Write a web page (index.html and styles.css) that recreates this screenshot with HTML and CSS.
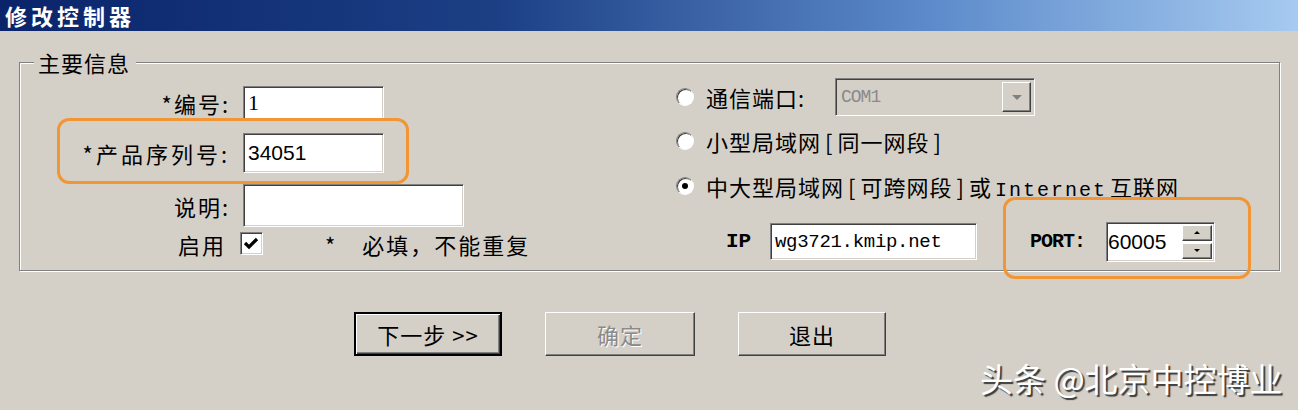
FILE: index.html
```html
<!DOCTYPE html>
<html lang="zh-CN">
<head>
<meta charset="utf-8">
<title>修改控制器</title>
<link rel="stylesheet" href="styles.css">
</head>
<body>
<div class="window">
  <div class="titlebar">修改控制器</div>
  <div class="client">
    <fieldset class="group">
      <legend>主要信息</legend>
      <div class="cols">
        <div class="left">
          <div class="row r1">
            <span class="lbl">*编号:</span>
            <div class="field f1"><span class="val serif">1</span></div>
          </div>
          <div class="row r2">
            <span class="lbl wide">*产品序列号:</span>
            <div class="field f2"><span class="val">34051</span></div>
          </div>
          <div class="row r3">
            <span class="lbl">说明:</span>
            <div class="field f3"></div>
          </div>
          <div class="row r4">
            <span class="lbl lbl4">启用</span>
            <span class="check">
              <svg width="17" height="15" viewBox="0 0 17 15"><path d="M2 7 L6 11 L14 3" fill="none" stroke="#000" stroke-width="3.2"/></svg>
            </span>
            <span class="star">*</span>
            <span class="note">必填，不能重复</span>
          </div>
        </div>
        <div class="right">
          <div class="rrow rr1">
            <span class="radio"></span>
            <span class="rtext rlbl">通信端口:</span>
            <div class="field combo">
              <span class="com">COM1</span>
              <span class="dropbtn"><span class="tri down"></span></span>
            </div>
          </div>
          <div class="rrow rr2">
            <span class="radio"></span>
            <span class="rtext">小型局域网<span class="br">[</span>同一网段<span class="br">]</span></span>
          </div>
          <div class="rrow rr3">
            <span class="radio on"></span>
            <span class="rtext">中大型局域网<span class="br">[</span>可跨网段<span class="br">]</span>或<span class="latin">Internet</span>互联网</span>
          </div>
          <div class="rrow ipro">
            <span class="mono iplbl">IP</span>
            <div class="field ipf"><span class="mono ipval">wg3721.kmip.net</span></div>
            <span class="mono portlbl">PORT:</span>
            <div class="field portf">
              <span class="val">60005</span>
              <span class="spin">
                <span class="spinbtn"><span class="tri up"></span></span>
                <span class="spinbtn"><span class="tri down small"></span></span>
              </span>
            </div>
          </div>
        </div>
      </div>
    </fieldset>
    <div class="buttons">
      <div class="btn default">下一步 &gt;&gt;</div>
      <div class="btn disabled">确定</div>
      <div class="btn">退出</div>
    </div>
  </div>
  <div class="annot a1"></div>
  <div class="annot a2"></div>
  <div class="watermark">头条 @北京中控博业</div>
</div>
</body>
</html>
```
FILE: styles.css
```css
html, body {
  margin: 0;
  padding: 0;
}
body {
  width: 1298px;
  height: 410px;
  overflow: hidden;
  background: #d4d0c8;
  font-family: "Noto Sans CJK SC", "Noto Sans", sans-serif;
  color: #000;
}
.window {
  position: relative;
  height: 410px;
}
.titlebar {
  height: 31px;
  box-sizing: border-box;
  background: linear-gradient(to right, #0a246a 0%, #1c3f84 38%, #5d8bcb 72%, #a6caf0 100%);
  color: #fff;
  font-weight: 700;
  font-size: 22px;
  line-height: 31px;
  padding-left: 5px;
  letter-spacing: 4px;
}
.client {
  padding: 17px 18px 0 19px;
}
.group {
  margin: 0;
  padding: 0 0 9px 0;
  min-width: 0;
  border: 1px solid #808080;
  box-shadow: 1px 1px 0 #fff, inset 1px 1px 0 #fff;
}
.group legend {
  margin-left: 14px;
  padding: 0 6px 0 4px;
  font-size: 22px;
  line-height: 28px;
  letter-spacing: 1px;
  background: #d4d0c8;
}
.cols {
  display: flex;
  align-items: flex-start;
  padding-top: 2px;
}
.left {
  width: 656px;
  padding-top: 8px;
}
.row {
  display: flex;
  align-items: center;
}
.r1 { height: 34px; margin-bottom: 13px; }
.r2 { height: 40px; margin-bottom: 11px; }
.r3 { height: 43px; margin-bottom: 5px; }
.r4 { height: 23px; }
.lbl {
  box-sizing: border-box;
  width: 214px;
  margin-right: 9px;
  padding-right: 4px;
  text-align: right;
  font-size: 22px;
  letter-spacing: 2px;
  white-space: nowrap;
}
.lbl.wide { letter-spacing: 3px; }
.lbl4 {
  width: 206px;
  margin-right: 14px;
  padding-right: 0;
}
.field {
  box-sizing: border-box;
  height: 100%;
  background: #fff;
  border: 1px solid;
  border-color: #808080 #fff #fff #808080;
  box-shadow: inset 1px 1px 0 #404040, inset -1px -1px 0 #d4d0c8;
  display: flex;
  align-items: center;
  padding-left: 4px;
}
.f1 { width: 141px; }
.f2 { width: 141px; }
.f3 { width: 221px; }
.val {
  font-family: "Liberation Sans", sans-serif;
  font-size: 21px;
}
.val.serif {
  font-family: "Liberation Serif", serif;
  font-size: 22px;
}
.check {
  box-sizing: border-box;
  width: 23px;
  height: 23px;
  background: #fff;
  border: 1px solid;
  border-color: #808080 #fff #fff #808080;
  box-shadow: inset 1px 1px 0 #404040, inset -1px -1px 0 #d4d0c8;
  display: flex;
  align-items: center;
  justify-content: center;
}
.star {
  margin-left: 62px;
  font-size: 22px;
}
.note {
  margin-left: 27px;
  font-size: 22px;
  letter-spacing: 2px;
}
.right {
  flex: 1;
}
.rrow {
  display: flex;
  align-items: center;
}
.rr1 { height: 38px; }
.rr2 { height: 30px; margin-top: 10px; }
.rr3 { height: 30px; margin-top: 15px; }
.ipro { height: 39px; margin-top: 21px; }
.radio {
  box-sizing: border-box;
  width: 18px;
  height: 18px;
  border-radius: 50%;
  background: #fff;
  border: 1px solid;
  border-color: #808080 #fff #fff #808080;
  box-shadow: inset 1px 1px 0 #404040;
  margin-right: 12px;
  display: flex;
  align-items: center;
  justify-content: center;
  flex: none;
}
.radio.on::after {
  content: "";
  width: 6px;
  height: 6px;
  border-radius: 50%;
  background: #000;
}
.rtext {
  font-size: 22px;
  letter-spacing: 1px;
  white-space: nowrap;
}
.rlbl { width: 129px; }
.br { padding: 0 4px; }
.latin {
  font-family: "Liberation Mono", monospace;
  font-size: 20px;
  letter-spacing: 2px;
  margin: 0 3px;
}
.combo {
  width: 200px;
  background: #d4d0c8;
  justify-content: space-between;
  padding: 0 3px 0 5px;
}
.com {
  font-family: "Liberation Mono", monospace;
  font-size: 18px;
  color: #8a8a8a;
  letter-spacing: -1px;
}
.dropbtn {
  box-sizing: border-box;
  width: 29px;
  height: 30px;
  background: #d4d0c8;
  border: 1px solid;
  border-color: #fff #404040 #404040 #fff;
  box-shadow: inset -1px -1px 0 #808080;
  display: flex;
  align-items: center;
  justify-content: center;
}
.tri {
  width: 0;
  height: 0;
  border-left: 5px solid transparent;
  border-right: 5px solid transparent;
}
.tri.down { border-top: 5px solid #808080; }
.tri.down.small { border-top-color: #000; border-left-width: 3px; border-right-width: 3px; border-top-width: 3px; }
.tri.up { border-bottom: 3px solid #000; border-left-width: 3px; border-right-width: 3px; }
.mono {
  font-family: "Liberation Mono", monospace;
}
.iplbl {
  margin-left: 50px;
  width: 44px;
  font-size: 21px;
  font-weight: 700;
}
.ipf {
  width: 207px;
  height: 37px;
}
.ipval {
  font-size: 19px;
  letter-spacing: -0.3px;
}
.portlbl {
  margin-left: 53px;
  width: 76px;
  font-size: 20px;
  font-weight: 700;
  letter-spacing: -1px;
}
.portf {
  width: 109px;
  height: 40px;
  justify-content: space-between;
  padding: 0 2px 0 1px;
}
.spin {
  display: flex;
  flex-direction: column;
  gap: 2px;
}
.spinbtn {
  box-sizing: border-box;
  width: 30px;
  height: 16px;
  background: #d4d0c8;
  border: 1px solid;
  border-color: #fff #404040 #404040 #fff;
  box-shadow: inset -1px -1px 0 #808080;
  display: flex;
  align-items: center;
  justify-content: center;
}
.buttons {
  display: flex;
  gap: 43px;
  margin-top: 41px;
  padding-left: 335px;
}
.btn {
  box-sizing: border-box;
  width: 148px;
  height: 44px;
  border: 1px solid;
  border-color: #fff #404040 #404040 #fff;
  box-shadow: inset -1px -1px 0 #808080;
  display: flex;
  align-items: center;
  justify-content: center;
  font-size: 22px;
  letter-spacing: 1px;
}
.btn.default {
  border: 2px solid #000;
  box-shadow: inset 1px 1px 0 #fff, inset -1px -1px 0 #404040, inset -2px -2px 0 #808080;
}
.btn.disabled {
  width: 150px;
  color: #8a8a8a;
  text-shadow: 1px 1px 0 #fff;
}
.annot {
  position: absolute;
  border: 3px solid #f29535;
  border-radius: 12px;
  box-sizing: border-box;
}
.a1 {
  left: 57px;
  top: 118px;
  width: 352px;
  height: 66px;
}
.a2 {
  left: 1003px;
  top: 197px;
  width: 248px;
  height: 82px;
}
.watermark {
  position: absolute;
  left: 980px;
  top: 355px;
  font-size: 33px;
  line-height: 46px;
  color: #fff;
  white-space: nowrap;
  text-shadow: 2px 2px 1px #3a3a3a;
}
```
